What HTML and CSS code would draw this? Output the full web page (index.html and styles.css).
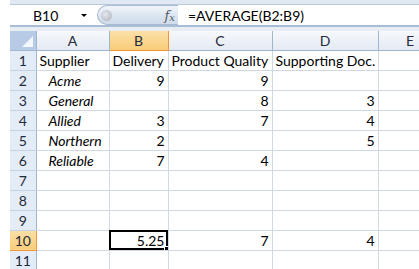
FILE: index.html
```html
<!DOCTYPE html>
<html lang="en">
<head>
  <meta charset="UTF-8">
  <title>Book1 - AVERAGE</title>
  <link rel="stylesheet" href="styles.css">
</head>
<body>
  <div class="window">
    <div class="top-band"></div>
    <div class="formula-bar">
      <div class="name-box">
        <span class="cell-ref">B10</span>
        <span class="drop-arrow"></span>
      </div>
      <div class="fx-box">
        <span class="bubble"></span>
        <span class="fx">f<sub>x</sub></span>
      </div>
      <div class="formula">=AVERAGE(B2:B9)</div>
    </div>
    <div class="gap"></div>

    <table class="sheet">
      <colgroup>
        <col class="c-rh">
        <col class="c-a">
        <col class="c-b">
        <col class="c-c">
        <col class="c-d">
        <col class="c-e">
      </colgroup>
      <tr class="col-heads">
        <th class="corner"><span class="tri"></span></th>
        <th>A</th>
        <th class="sel">B</th>
        <th>C</th>
        <th>D</th>
        <th>E</th>
      </tr>
      <tr>
        <th class="rh">1</th>
        <td>Supplier</td>
        <td>Delivery</td>
        <td>Product Quality</td>
        <td>Supporting Doc.</td>
        <td></td>
      </tr>
      <tr>
        <th class="rh">2</th>
        <td class="name">Acme</td>
        <td class="num">9</td>
        <td class="num">9</td>
        <td class="num"></td>
        <td></td>
      </tr>
      <tr>
        <th class="rh">3</th>
        <td class="name">General</td>
        <td class="num"></td>
        <td class="num">8</td>
        <td class="num">3</td>
        <td></td>
      </tr>
      <tr>
        <th class="rh">4</th>
        <td class="name">Allied</td>
        <td class="num">3</td>
        <td class="num">7</td>
        <td class="num">4</td>
        <td></td>
      </tr>
      <tr>
        <th class="rh">5</th>
        <td class="name">Northern</td>
        <td class="num">2</td>
        <td class="num"></td>
        <td class="num">5</td>
        <td></td>
      </tr>
      <tr>
        <th class="rh">6</th>
        <td class="name">Reliable</td>
        <td class="num">7</td>
        <td class="num">4</td>
        <td class="num"></td>
        <td></td>
      </tr>
      <tr>
        <th class="rh">7</th>
        <td></td><td></td><td></td><td></td><td></td>
      </tr>
      <tr>
        <th class="rh">8</th>
        <td></td><td></td><td></td><td></td><td></td>
      </tr>
      <tr>
        <th class="rh">9</th>
        <td></td><td></td><td></td><td></td><td></td>
      </tr>
      <tr class="total">
        <th class="rh sel">10</th>
        <td></td>
        <td class="num active">5.25<span class="handle"></span></td>
        <td class="num">7</td>
        <td class="num">4</td>
        <td class="no-line"></td>
      </tr>
      <tr>
        <th class="rh">11</th>
        <td></td><td></td><td></td><td></td><td></td>
      </tr>
    </table>
  </div>
</body>
</html>
```

FILE: styles.css
```css
body {
  margin: 0;
  background: #ffffff;
  font-family: Lato, "Open Sans", sans-serif;
  font-size: 14px;
  color: #000000;
  overflow: hidden;
}
.window {
  margin-left: 10px;
  overflow: hidden;
}
.top-band {
  height: 4px;
  background: #dfe8f3;
  border-bottom: 1px solid #b9c9dc;
}
.formula-bar {
  display: flex;
  align-items: center;
  height: 20px;
  background: #ffffff;
  border-bottom: 2px solid #a8bdd6;
}
.name-box {
  width: 80px;
  display: flex;
  align-items: center;
  height: 100%;
}
.cell-ref {
  margin-left: 23px;
  width: 48px;
}
.drop-arrow {
  width: 0;
  height: 0;
  border-left: 3px solid transparent;
  border-right: 3px solid transparent;
  border-top: 3px solid #000000;
  margin-top: 1px;
}
.fx-box {
  margin-left: 7px;
  width: 81px;
  height: 20px;
  box-sizing: border-box;
  border: 1px solid #a9b9cf;
  border-right: none;
  border-radius: 10px 0 0 10px;
  background: linear-gradient(#f2f6fb, #dde6f2 50%, #cfdbeb);
  display: flex;
  align-items: center;
  justify-content: space-between;
  padding: 0 3px 0 3px;
}
.bubble {
  width: 11px;
  height: 11px;
  border-radius: 50%;
  background: radial-gradient(circle at 40% 40%, #e6e9ee, #a9b0ba);
}
.fx {
  font-family: "DejaVu Serif", "Liberation Serif", serif;
  font-style: italic;
  font-size: 13px;
  color: #555a63;
}
.fx sub {
  font-size: 10px;
  vertical-align: -1px;
}
.formula {
  margin-left: 10px;
  white-space: nowrap;
}
.gap {
  height: 4px;
  background: #e8edf4;
}
.sheet {
  border-collapse: collapse;
  table-layout: fixed;
  width: 432px;
}
.c-rh { width: 26px; }
.c-a { width: 73px; }
.c-b { width: 59px; }
.c-c { width: 104px; }
.c-d { width: 106px; }
.c-e { width: 64px; }
.sheet th,
.sheet td {
  height: 20px;
  padding: 0 3px;
  box-sizing: border-box;
  white-space: nowrap;
  overflow: hidden;
}
.sheet td {
  border: 1px solid #d0d7e5;
  border-top: none;
  border-left: none;
}
.col-heads th {
  height: 19px;
  font-weight: normal;
  text-align: center;
  background: linear-gradient(#f6f8fb, #e4eaf3);
  border-right: 1px solid #9eb6ce;
  border-bottom: 1px solid #9eb6ce;
  color: #1f2a3a;
}
.col-heads th.sel {
  background: linear-gradient(#fbe0a7, #f8cc7a);
  border-right-color: #f29536;
  border-bottom-color: #f29536;
}
.corner {
  position: relative;
  background: #b7cbe6 !important;
  border-right: 1px solid #9eb6ce;
}
.tri {
  position: absolute;
  right: 3px;
  bottom: 3px;
  width: 0;
  height: 0;
  border-left: 11px solid transparent;
  border-bottom: 11px solid #f4f7fb;
}
.rh {
  font-weight: normal;
  text-align: center;
  background: #e4ecf7;
  border-right: 1px solid #9eb6ce;
  border-bottom: 1px solid #c5d2e3;
  color: #1f2a3a;
}
.rh.sel {
  background: linear-gradient(#fbe0a7, #f8cc7a);
  border-right-color: #f29536;
  border-bottom-color: #f29536;
}
.sheet td.name {
  font-style: italic;
  padding-left: 12px;
}
.num {
  text-align: right;
}
.total td {
  border-top: 1px solid #000000;
}
.total td.no-line {
  border-top-color: #d0d7e5;
}
.active {
  position: relative;
  overflow: visible;
  outline: 2px solid #000000;
  outline-offset: -2px;
}
.handle {
  position: absolute;
  right: -3px;
  bottom: -3px;
  width: 5px;
  height: 5px;
  background: #000000;
  border: 1px solid #ffffff;
}
```
